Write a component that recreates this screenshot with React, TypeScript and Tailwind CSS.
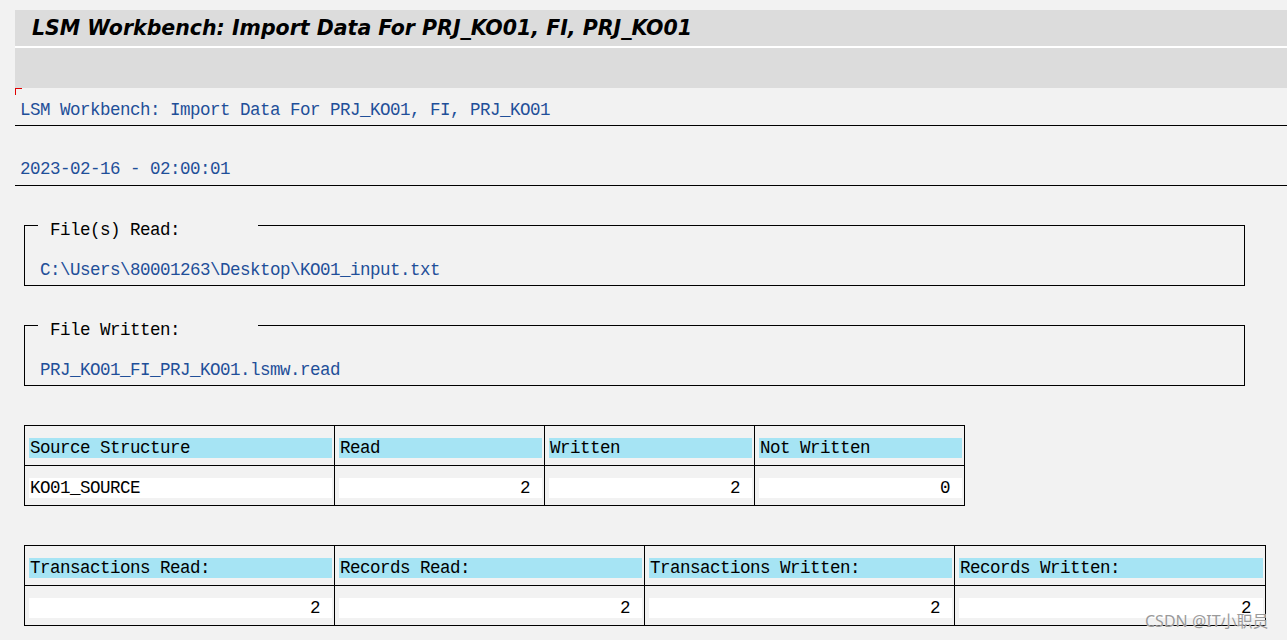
import React from "react";

const mono = { fontFamily: '"Liberation Mono", "DejaVu Sans Mono", monospace' };

function Band({ children, right, header }: { children: React.ReactNode; right?: boolean; header?: boolean }) {
  return (
    <div className="pl-[4px] pr-[2px] pt-[12px] pb-[7px]">
      <div
        className={
          "h-[20px] leading-[21px] text-black whitespace-pre " +
          (header ? "bg-[#a6e4f4] pl-[1px] " : "bg-white ") +
          (right ? "text-right pr-[12px]" : "pl-[1px]")
        }
      >
        {children}
      </div>
    </div>
  );
}

function Fieldset({ label, value }: { label: string; value: string }) {
  return (
    <fieldset className="ml-[9px] w-[1221px] border border-black">
      <legend className="ml-[13px] w-[220px] pl-[12px] pt-[10px] leading-[20px] text-black whitespace-pre">
        {label}
      </legend>
      <div className="pl-[15px] pt-[20px] pb-[5px] leading-[20px] text-[#1f4f99] whitespace-pre">{value}</div>
    </fieldset>
  );
}

export default function App() {
  const t1 = [
    ["Source Structure", "Read", "Written", "Not Written"],
    ["KO01_SOURCE", "2", "2", "0"],
  ];
  const t2 = [
    ["Transactions Read:", "Records Read:", "Transactions Written:", "Records Written:"],
    ["2", "2", "2", "2"],
  ];
  return (
    <div
      className="relative w-[1287px] h-[640px] overflow-hidden bg-[#f2f2f2] text-[17.5px] tracking-[-0.5px]"
      style={mono}
    >
      <div className="pt-[10px] pl-[15px]">
        <div className="h-[36px] bg-[#dcdcdc] pl-[17px] flex items-center">
          <span
            className="text-[20.5px] font-bold italic text-black tracking-normal"
            style={{ fontFamily: '"DejaVu Sans", Verdana, sans-serif' }}
          >
            LSM Workbench: Import Data For PRJ_KO01, FI, PRJ_KO01
          </span>
        </div>
        <div className="h-[2px] bg-white" />
        <div className="h-[40px] bg-[#dcdcdc]" />
        <div className="relative">
          <div className="absolute left-0 top-0 w-[7px] h-[7px] border-t border-l border-[#e00000]" />
          <div className="pl-[5px] pt-[12px] pb-[5px] leading-[20px] text-[#1f4f99] border-b border-black whitespace-pre">
            LSM Workbench: Import Data For PRJ_KO01, FI, PRJ_KO01
          </div>
          <div className="pl-[5px] pt-[33px] pb-[6px] leading-[20px] text-[#1f4f99] border-b border-black whitespace-pre">
            2023-02-16 - 02:00:01
          </div>
          <div className="mt-[24px]">
            <Fieldset label="File(s) Read:" value="C:\Users\80001263\Desktop\KO01_input.txt" />
          </div>
          <div className="mt-[24px]">
            <Fieldset label="File Written:" value="PRJ_KO01_FI_PRJ_KO01.lsmw.read" />
          </div>
          <div className="mt-[39px] ml-[9px] grid grid-cols-[310px_210px_210px_210px] w-[941px] border-l border-t border-black">
            {t1.map((row, ri) =>
              row.map((c, ci) => (
                <div key={ri + "-" + ci} className="border-r border-b border-black">
                  <Band header={ri === 0} right={ri === 1 && ci > 0}>
                    {c}
                  </Band>
                </div>
              ))
            )}
          </div>
          <div className="mt-[39px] ml-[9px] grid grid-cols-[310px_310px_310px_311px] w-[1242px] border-l border-t border-black">
            {t2.map((row, ri) =>
              row.map((c, ci) => (
                <div key={ri + "-" + ci} className="border-r border-b border-black">
                  <Band header={ri === 0} right={ri === 1}>
                    {c}
                  </Band>
                </div>
              ))
            )}
          </div>
        </div>
      </div>
      <div
        className="absolute left-[1145px] top-[609px] text-[16px] tracking-normal text-[#9a9a9a] whitespace-pre"
        style={{ fontFamily: '"Noto Sans", "Noto Sans CJK SC", sans-serif', textShadow: "0 0 1px #ffffff" }}
      >
        CSDN @IT小职员
      </div>
    </div>
  );
}
